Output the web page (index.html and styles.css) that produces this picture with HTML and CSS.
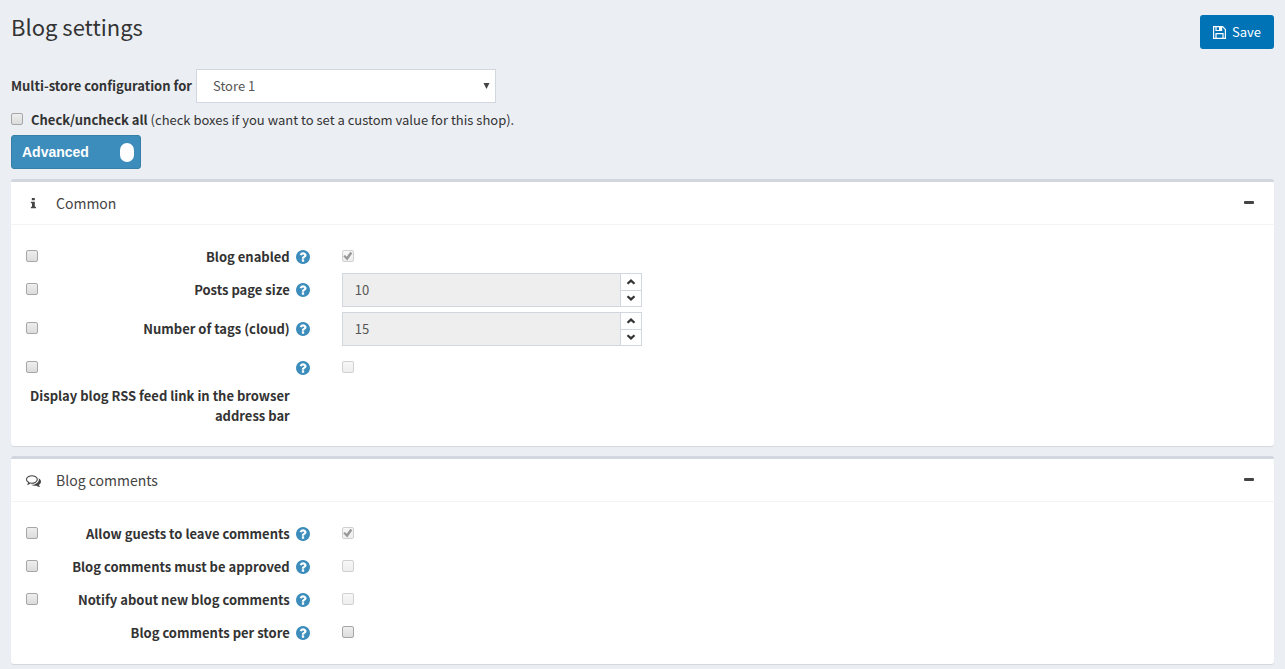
FILE: index.html
```html
<!DOCTYPE html>
<html lang="en">
<head>
<meta charset="utf-8">
<meta name="viewport" content="width=device-width, initial-scale=1">
<title>Blog settings</title>
<link rel="stylesheet" href="styles.css">
</head>
<body>
<svg class="sprite" aria-hidden="true">
  <symbol id="help" viewBox="0 0 1536 1536"><path fill="currentColor" d="M896 1248v-192q0-14-9-23t-23-9H672q-14 0-23 9t-9 23v192q0 14 9 23t23 9h192q14 0 23-9t9-23zm256-672q0-88-55.500-163t-138.500-116-170-41q-243 0-371 213-15 24 8 42l132 100q7 6 19 6 16 0 25-12 53-68 86-92 34-24 86-24 48 0 85.500 26t37.500 59q0 38-20 61t-68 45q-63 28-115.500 86.500T640 892v36q0 14 9 23t23 9h192q14 0 23-9t9-23q0-19 21.500-49.500T972 829q32-18 49-28.500t46-35 44.500-48 28-60.500 12.500-81zm384 192q0 209-103 385.500T1153.500 1433 768 1536t-385.500-103T103 1153.500 0 768t103-385.500T382.500 103 768 0t385.500 103T1433 382.500 1536 768z"/></symbol>
  <symbol id="up" viewBox="0 0 10 8"><path d="M1.500 5.800 5 2.600l3.500 3.200" fill="none" stroke="currentColor" stroke-width="2.200"/></symbol>
  <symbol id="down" viewBox="0 0 10 8"><path d="M1.500 2.200 5 5.400l3.500-3.200" fill="none" stroke="currentColor" stroke-width="2.200"/></symbol>
</svg>
<form class="page">
  <header class="page-header">
    <h1 class="title">Blog settings</h1>
    <button class="save" type="button">
      <svg class="save-icon" viewBox="0 0 13 13" aria-hidden="true"><path fill="none" stroke="currentColor" stroke-width="1.200" d="M.6.6h9L12.400 3.400v9H.6zM3 .6v3.900h5.600V.6M3 12.400V7.600h7v4.800"/><path fill="currentColor" d="M6 1h2v3H6z"/></svg>
      <span>Save</span>
    </button>
  </header>

  <div class="store">
    <label class="strong" for="store">Multi-store configuration for</label>
    <div class="select-wrap">
      <select id="store" class="select"><option>Store 1</option></select>
      <svg class="arrow" viewBox="0 0 6 6" aria-hidden="true"><path d="M0 0h6L3 6z" fill="currentColor"/></svg>
    </div>
  </div>
  <div class="check-all">
    <input class="check" type="checkbox" id="all">
    <label for="all"><strong class="strong">Check/uncheck all</strong> (check boxes if you want to set a custom value for this shop).</label>
  </div>
  <button class="mode" type="button" role="switch" aria-checked="true">Advanced<span class="knob"></span></button>

  <section class="panel">
    <header class="panel-header">
      <svg class="panel-icon" viewBox="0 0 16 16" aria-hidden="true"><path fill="currentColor" d="M6.200 2h3.200v2.600H6.200zM5.200 6h4.200v5.400h1.200V13H5.200v-1.600h1.200V7.600H5.200z"/></svg>
      <h2 class="panel-title">Common</h2>
      <button class="collapse" type="button" aria-label="Collapse Common"><span class="minus"></span></button>
    </header>
    <div class="panel-body">
      <div class="row">
        <div class="name"><input class="check" type="checkbox" aria-label="Override blog enabled"><label class="strong label" for="enabled">Blog enabled</label><svg class="help"><use href="#help"/></svg></div>
        <div class="value"><input class="check" type="checkbox" id="enabled" checked disabled></div>
      </div>
      <div class="row">
        <div class="name"><input class="check" type="checkbox" aria-label="Override posts page size"><label class="strong label" for="size">Posts page size</label><svg class="help"><use href="#help"/></svg></div>
        <div class="value"><div class="number"><input class="number-input" id="size" type="text" value="10" disabled><div class="steps"><button class="step" type="button" aria-label="Increase posts page size"><svg class="chevron"><use href="#up"/></svg></button><button class="step" type="button" aria-label="Decrease posts page size"><svg class="chevron"><use href="#down"/></svg></button></div></div></div>
      </div>
      <div class="row">
        <div class="name"><input class="check" type="checkbox" aria-label="Override number of tags"><label class="strong label" for="tags">Number of tags (cloud)</label><svg class="help"><use href="#help"/></svg></div>
        <div class="value"><div class="number"><input class="number-input" id="tags" type="text" value="15" disabled><div class="steps"><button class="step" type="button" aria-label="Increase number of tags"><svg class="chevron"><use href="#up"/></svg></button><button class="step" type="button" aria-label="Decrease number of tags"><svg class="chevron"><use href="#down"/></svg></button></div></div></div>
      </div>
      <div class="row">
        <div class="name name-stacked"><input class="check" type="checkbox" aria-label="Override RSS feed link"><label class="strong label" for="rss">Display blog RSS feed link in the browser address bar</label><svg class="help"><use href="#help"/></svg></div>
        <div class="value"><input class="check" type="checkbox" id="rss" disabled></div>
      </div>
    </div>
  </section>

  <section class="panel">
    <header class="panel-header">
      <svg class="panel-icon" viewBox="0 0 1792 1792" aria-hidden="true"><path fill="currentColor" d="M704 384q-153 0-286 52T206.500 577 128 768q0 82 53 158t149 132l97 56-35 84q34-20 62-39l44-31 53 10q78 14 153 14 153 0 286-52t211.500-141 78.500-191-78.500-191T990 436t-286-52zm0-128q191 0 353.500 68.500t256.500 186.500 94 257-94 257-256.500 186.500T704 1280q-86 0-176-16-124 88-278 128-36 9-86 16h-3q-11 0-20.500-8t-11.500-21q-1-3-1-6.500t.5-6.500 2-6l2.500-5 3.500-5.500 4-5 4.500-5 4-4.500q5-6 23-25t26-29.500 22.500-29 25-38.500 20.500-44q-124-72-195-177T0 768q0-139 94-257t256.500-186.500T704 256zm822 1169q10 24 20.500 44t25 38.500 22.500 29 26 29.500 23 25q1 1 4 4.500t4.500 5 4 5 3.500 5.500l2.500 5 2 6 .5 6.500-1 6.500q-3 14-13 22t-22 7q-50-7-86-16-154-40-278-128-90 16-176 16-271 0-472-132 58 4 88 4 161 0 309-45t264-129q125-92 192-212t67-254q0-77-23-152 129 71 204 178t75 230q0 120-71 224.500t-195 176.500z"/></svg>
      <h2 class="panel-title">Blog comments</h2>
      <button class="collapse" type="button" aria-label="Collapse Blog comments"><span class="minus"></span></button>
    </header>
    <div class="panel-body">
      <div class="row">
        <div class="name"><input class="check" type="checkbox" aria-label="Override guest comments"><label class="strong label" for="guests">Allow guests to leave comments</label><svg class="help"><use href="#help"/></svg></div>
        <div class="value"><input class="check" type="checkbox" id="guests" checked disabled></div>
      </div>
      <div class="row">
        <div class="name"><input class="check" type="checkbox" aria-label="Override comment approval"><label class="strong label" for="approved">Blog comments must be approved</label><svg class="help"><use href="#help"/></svg></div>
        <div class="value"><input class="check" type="checkbox" id="approved" disabled></div>
      </div>
      <div class="row">
        <div class="name"><input class="check" type="checkbox" aria-label="Override comment notifications"><label class="strong label" for="notify">Notify about new blog comments</label><svg class="help"><use href="#help"/></svg></div>
        <div class="value"><input class="check" type="checkbox" id="notify" disabled></div>
      </div>
      <div class="row">
        <div class="name"><label class="strong label" for="perstore">Blog comments per store</label><svg class="help"><use href="#help"/></svg></div>
        <div class="value"><input class="check" type="checkbox" id="perstore"></div>
      </div>
    </div>
  </section>
</form>
</body>
</html>
```
FILE: styles.css
```css
* { box-sizing: border-box; }
body {
  margin: 0;
  background: #ebeff4;
  color: #333;
  font: 13px/20px "Noto Sans CJK SC", "Open Sans", sans-serif;
}
button, input, select { font: inherit; color: inherit; margin: 0; }
.sprite { display: none; }
.page { padding: 15px 11px 5px; }
.strong { font-weight: 700; }

.page-header { display: flex; justify-content: space-between; align-items: flex-start; margin-bottom: 20px; }
.title { margin: 0; font-size: 22px; font-weight: 400; line-height: 22px; }
.save {
  display: flex; align-items: center; gap: 6px;
  height: 34px; padding: 0 13px;
  border: 0; border-radius: 3px;
  background: #0073b7; color: #fff;
}
.save-icon { width: 13px; height: 13px; }

.store { display: flex; align-items: center; gap: 4px; }
.select-wrap { position: relative; width: 300px; }
.select {
  display: block; appearance: none;
  width: 100%; height: 34px; padding: 0 16px;
  border: 1px solid #d2d6de; border-radius: 0;
  background: #fff; color: #555;
}
.arrow { position: absolute; right: 6px; top: 14px; width: 7px; height: 6px; color: #444; pointer-events: none; }

.check-all { display: flex; gap: 8px; margin: 7px 0 5px; }
.check {
  appearance: none; flex: none; position: relative;
  width: 12px; height: 12px;
  border: 1px solid #a6a6a6; border-radius: 2px;
  background: linear-gradient(#eee, #dcdcdc);
}
.check-all .check { margin-top: 3px; }
.check:disabled { border-color: #d0d0d0; background: linear-gradient(#f7f7f7, #eee); }
.check:checked::before {
  content: ""; position: absolute; inset: 0;
  background: #999;
  clip-path: polygon(5% 53%, 22% 40%, 40% 58%, 76% 8%, 96% 22%, 45% 94%);
}

.mode {
  display: flex; align-items: center; justify-content: space-between;
  width: 130px; height: 34px; padding: 0 6px 0 10px; margin-bottom: 10px;
  border: 1px solid #367fa9; border-radius: 3px;
  background: #3c8dbc; color: #fff;
  font: 700 14px/20px "Liberation Sans", Arial, sans-serif;
}
.knob { width: 14px; height: 19px; border-radius: 7px; background: #fff; }

.panel {
  margin-bottom: 10px;
  border-top: 3px solid #d2d6de; border-radius: 3px;
  background: #fff; box-shadow: 0 1px 1px rgba(0, 0, 0, .1);
}
.panel-header {
  display: flex; align-items: center;
  height: 43px; padding: 0 20px 0 15px;
  border-bottom: 1px solid #f4f4f4;
}
.panel-icon { width: 15px; height: 15px; margin-right: 15px; color: #444; }
.panel-title { margin: 0; font-size: 14px; font-weight: 400; color: #444; }
.collapse { display: flex; align-items: center; margin-left: auto; height: 20px; padding: 0 0 2px; border: 0; background: none; }
.minus { width: 10px; height: 3px; background: #444; border-radius: 1px; }
.panel-body { padding: 15px 0; }

.row { display: grid; grid-template-columns: 25% 1fr; margin-bottom: 5px; }
.name {
  display: grid; grid-template-columns: 12px 1fr 14px; column-gap: 6px;
  align-items: start; padding: 7px 17px 0 15px;
}
.name .check { grid-column: 1; grid-row: 1; margin-top: 3px; }
.label { grid-column: 2; grid-row: 1; text-align: right; line-height: 20px; padding-bottom: 1px; }
.help { grid-column: 3; grid-row: 1; width: 14px; height: 14px; margin-top: 3px; color: #3c8dbc; }
.name-stacked { grid-template-rows: 20px auto; row-gap: 8px; }
.name-stacked .label { grid-column: 1 / 3; grid-row: 2; padding: 0; }
.value { padding: 0 15px; }
.value > .check { display: block; margin-top: 10px; }

.number { display: flex; width: 300px; height: 34px; border: 1px solid #d2d6de; }
.number-input { flex: 1; min-width: 0; border: 0; padding: 0 12px; background: #eee; color: #555; }
.steps { display: flex; flex-direction: column; width: 21px; border-left: 1px solid #d2d6de; }
.step { display: flex; flex: 1; align-items: center; justify-content: center; padding: 0; border: 0; background: #fff; color: #333; }
.step + .step { border-top: 1px solid #d2d6de; }
.chevron { width: 10px; height: 8px; }
```
